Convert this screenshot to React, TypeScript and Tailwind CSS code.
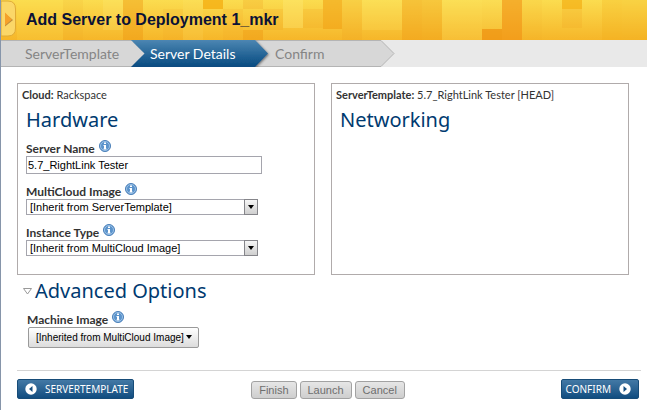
import React from "react";

type Tile = [x: number, y: number, w: number, h: number, fill: string, opacity: number];

const tiles: Tile[] = [
  [16, 0, 46, 40, "#fde050", 0.2],
  [62, 0, 20, 40, "#f0a020", 0.1],
  [102, 0, 20, 30, "#fff080", 0.2],
  [122, 0, 20, 40, "#ee9410", 0.4],
  [162, 9, 20, 31, "#f0a020", 0.12],
  [202, 0, 20, 9, "#f3a90c", 0.7],
  [182, 0, 20, 40, "#fff080", 0.12],
  [222, 9, 20, 31, "#f0a020", 0.15],
  [242, 30, 20, 10, "#ee9410", 0.4],
  [242, 0, 20, 9, "#f0a020", 0.25],
  [262, 9, 20, 21, "#f0a020", 0.2],
  [282, 0, 20, 28, "#fff080", 0.3],
  [302, 9, 20, 19, "#f0a020", 0.2],
  [322, 0, 20, 29, "#f09c10", 0.55],
  [342, 0, 20, 40, "#f0a020", 0.2],
  [362, 0, 40, 30, "#fff080", 0.15],
  [402, 0, 20, 40, "#ee9410", 0.35],
  [422, 0, 20, 40, "#ee9410", 0.28],
  [442, 0, 40, 40, "#fff080", 0.15],
  [482, 0, 20, 29, "#fff080", 0.1],
  [482, 29, 20, 11, "#ee8e10", 0.65],
  [502, 0, 20, 40, "#f08a10", 0.55],
  [522, 0, 20, 40, "#f0a020", 0.08],
  [562, 0, 20, 9, "#f3a90c", 0.6],
  [562, 9, 20, 19, "#f0a020", 0.2],
  [602, 0, 20, 40, "#f0a810", 0.22],
  [622, 0, 25, 40, "#f0a810", 0.18],
];

function Banner() {
  return (
    <header className="relative flex h-10 items-center overflow-hidden bg-[#f8c53a]">
      <svg
        className="absolute inset-0 h-full w-full"
        viewBox="0 0 647 40"
        preserveAspectRatio="none"
        shapeRendering="crispEdges"
        aria-hidden="true"
      >
        <defs>
          <linearGradient id="gold" x1="0" y1="0" x2="0" y2="1">
            <stop offset="0" stopColor="#fbdc4f" />
            <stop offset="1" stopColor="#f6b629" />
          </linearGradient>
        </defs>
        <rect width="647" height="40" fill="url(#gold)" />
        {tiles.map(([x, y, w, h, fill, opacity]) => (
          <rect key={`${x}-${y}`} x={x} y={y} width={w} height={h} fill={fill} fillOpacity={opacity} />
        ))}
      </svg>
      <button
        aria-label="Expand sidebar"
        className="relative flex h-full w-4 shrink-0 items-start"
      >
        <svg width="16" height="40" viewBox="0 0 16 40" aria-hidden="true">
          <path d="M0 1H7Q14.500 1 14.500 9V28Q14.500 36 7 36H0Z" fill="#fbd768" stroke="#e0ab35" />
          <path d="M4 13.500L12 20L4 26.500Z" fill="#b98a3d" />
          <path d="M4 12.500L11 19.500L4 25.500Z" fill="#f5a12a" />
        </svg>
      </button>
      <h1 className="relative pl-[9px] font-['Liberation_Sans',Arial,sans-serif] text-base font-bold text-[#0b1236]">
        Add Server to Deployment 1_mkr
      </h1>
    </header>
  );
}

function Steps() {
  return (
    <nav className="relative h-[27px] bg-[#e9e9e9] text-sm">
      <svg className="absolute top-0 left-0" width="400" height="27" viewBox="1 0 400 27" aria-hidden="true">
        <defs>
          <linearGradient id="step" x1="0" y1="0" x2="0" y2="1">
            <stop offset="0" stopColor="#4c86b2" />
            <stop offset="1" stopColor="#064a80" />
          </linearGradient>
          <filter id="shade" x="-10%" y="-10%" width="120%" height="120%">
            <feDropShadow dx="1" dy="1" stdDeviation="1" floodColor="#333" floodOpacity="0.6" />
          </filter>
        </defs>
        <path d="M0 .5H381L394 13.500L381 26.500H0" fill="#d7d7d7" stroke="#b4b4b4" />
        <path d="M131 0H255L268 13.500L255 27H131L144 13.500Z" fill="url(#step)" filter="url(#shade)" />
        <path d="M120 1H131.500L144.500 13.500L131.500 26H120Z" fill="#d7d7d7" />
      </svg>
      <ol className="relative flex h-full items-center pl-6 text-[#858585]">
        <li className="w-[125px]">ServerTemplate</li>
        <li className="w-[125px] text-white" aria-current="step">Server Details</li>
        <li>Confirm</li>
      </ol>
    </nav>
  );
}

function Info() {
  return (
    <svg className="ml-1 inline-block shrink-0" width="12" height="12" viewBox="0 0 12 12" role="img" aria-label="Help">
      <circle cx="6" cy="6" r="5.500" fill="#5b93cb" stroke="#4a7fb8" />
      <circle cx="6" cy="6" r="4.500" fill="none" stroke="#a8cbec" strokeWidth=".8" />
      <path d="M5 2.500H7V4H5ZM4.500 5H7V8.500H7.500V9.500H4.500V8.500H5V6H4.500Z" fill="#fff" />
    </svg>
  );
}

function FieldLabel({ id, children }: { id: string; children: React.ReactNode }) {
  return (
    <div className="flex h-4 items-start text-xs leading-[18px] font-bold text-[#333]">
      <label htmlFor={id}>{children}</label>
      <Info />
    </div>
  );
}

function SelectField({ id, label, value }: { id: string; label: string; value: string }) {
  return (
    <div>
      <FieldLabel id={id}>{label}</FieldLabel>
      <div className="relative w-[232px]">
        <select
          id={id}
          className="block h-4 w-full appearance-none border border-[#a5a5ad] bg-white pl-[3px] font-['Liberation_Sans',Arial,sans-serif] text-[11px] leading-[14px] text-black"
        >
          <option>{value}</option>
        </select>
        <span className="pointer-events-none absolute top-0 right-0 flex h-4 w-3.5 items-center justify-center border border-[#85858a] bg-linear-to-b from-[#f6f6f6] to-[#cfcfcf]">
          <svg width="6" height="4" viewBox="0 0 6 4" aria-hidden="true">
            <path d="M0 0H6L3 4Z" fill="#000" />
          </svg>
        </span>
      </div>
    </div>
  );
}

function Arrow({ left = false }: { left?: boolean }) {
  return (
    <svg width="12" height="12" viewBox="0 0 12 12" aria-hidden="true">
      <circle cx="6" cy="6" r="5.700" fill="#fff" />
      <path d={left ? "M7.500 3L4 6L7.500 9Z" : "M4.500 3L8 6L4.500 9Z"} fill="#164f80" />
    </svg>
  );
}

const blueButton =
  "flex h-5 items-center rounded-xs border border-[#174c78] bg-linear-to-b from-[#4379a5] to-[#104d80] font-['Noto_Sans',sans-serif] text-[10px] text-white";
const grayButton =
  "h-[18px] rounded-[3px] border border-[#a2a2a2] bg-linear-to-b from-[#e6e6e6] to-[#cecece] px-[7px] font-['Liberation_Sans',Arial,sans-serif] text-[11px] leading-4 text-[#6e6e6e]";
const heading = "font-['Noto_Sans',sans-serif] text-xl leading-7 text-[#003a70]";

export default function App() {
  return (
    <div className="min-h-screen border-l border-[#8695aa] bg-white font-['Lato','Lucida_Sans',sans-serif] text-[#333]">
      <Banner />
      <Steps />
      <main className="pt-4 pr-1.5 pl-4">
        <div className="mr-3 grid grid-cols-2 gap-4">
          <section className="h-48 border border-[#b0abab] px-1 pt-1">
            <p className="text-[11px] leading-[14px]"><b>Cloud:</b> Rackspace</p>
            <div className="px-1">
              <h2 className={`${heading} pt-1`}>Hardware</h2>
              <div className="flex flex-col gap-[9px] pt-1.5">
                <div>
                  <FieldLabel id="name">Server Name</FieldLabel>
                  <input
                    id="name"
                    defaultValue="5.7_RightLink Tester"
                    className="block h-[18px] w-[236px] border border-[#a5a5ad] bg-white px-px font-['Liberation_Sans',Arial,sans-serif] text-[11px] text-black"
                  />
                </div>
                <SelectField id="image" label="MultiCloud Image" value="[Inherit from ServerTemplate]" />
                <SelectField id="type" label="Instance Type" value="[Inherit from MultiCloud Image]" />
              </div>
            </div>
          </section>
          <section className="h-48 border border-[#b0abab] px-1 pt-1">
            <p className="text-[11px] leading-[14px]"><b>ServerTemplate:</b> 5.7_RightLink Tester [HEAD]</p>
            <h2 className={`${heading} px-1 pt-1`}>Networking</h2>
          </section>
        </div>

        <section className="pt-0.5">
          <h2 className={heading}>
            <button aria-expanded="true" className="flex items-center pl-1.5">
              <svg className="mr-0.5" width="10" height="7" viewBox="0 0 10 7" aria-hidden="true">
                <path d="M.5 .5H8.500L4.500 6Z" fill="#fff" stroke="#999" />
              </svg>
              Advanced Options
            </button>
          </h2>
          <div className="pt-1.5 pl-2.5">
            <FieldLabel id="machine">Machine Image</FieldLabel>
            <div className="relative ml-px w-[171px]">
              <select
                id="machine"
                className="block h-[21px] w-full appearance-none rounded-xs border border-[#9a9a9a] bg-linear-to-b from-white to-[#dcdcdc] pl-[7px] font-['Liberation_Sans',Arial,sans-serif] text-[10px] text-black"
              >
                <option>[Inherited from MultiCloud Image]</option>
              </select>
              <svg className="pointer-events-none absolute top-2 right-[7px]" width="6" height="4" viewBox="0 0 6 4" aria-hidden="true">
                <path d="M0 0H6L3 4Z" fill="#000" />
              </svg>
            </div>
          </div>
        </section>

        <footer className="mt-[22px] grid grid-cols-[1fr_auto_1fr] items-end border-t border-[#d4d4d4] pt-2 pr-0.5">
          <button className={`${blueButton} gap-2 justify-self-start pr-[5px] pl-[7px]`}>
            <Arrow left />
            SERVERTEMPLATE
          </button>
          <div className="flex gap-[3px]">
            <button className={grayButton}>Finish</button>
            <button className={grayButton}>Launch</button>
            <button className={grayButton}>Cancel</button>
          </div>
          <button className={`${blueButton} gap-2 justify-self-end pr-[7px] pl-1`}>
            CONFIRM
            <Arrow />
          </button>
        </footer>
      </main>
    </div>
  );
}
